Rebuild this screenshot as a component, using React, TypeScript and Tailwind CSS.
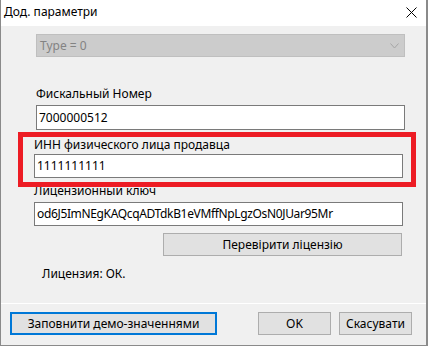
import React from "react";

const font = { fontFamily: '"Noto Sans", "Open Sans", sans-serif' };

export default function App() {
  return (
    <div
      className="relative w-[428px] h-[346px] bg-[#f0f0f0] border-l border-r-2 border-b border-[#8a8a8a] flex flex-col text-[12px] text-black overflow-hidden"
      style={font}
    >
      {/* title bar */}
      <div className="h-[26px] bg-white flex items-center justify-between pl-[3px] pr-[9px] shrink-0">
        <span className="leading-[16px] text-[12px] mt-[-2px]">Дод. параметри</span>
        <svg width="11" height="11" viewBox="0 0 11 11" className="mt-[-2px]">
          <path d="M0.5 0.5 L10.5 10.5 M10.5 0.5 L0.5 10.5" stroke="#000" strokeWidth="1" />
        </svg>
      </div>

      {/* content */}
      <div className="flex flex-col">
        <div className="ml-[35px] mt-[8px] w-[369px] h-[23px] bg-[#cccccc] border border-[#bfbfbf] flex items-center justify-between pl-[3px] pr-[5px]">
          <span className="text-[#838383] leading-[16px]">Type = 0</span>
          <svg width="9" height="6" viewBox="0 0 9 6">
            <path d="M0.5 0.5 L4.5 5 L8.5 0.5" fill="none" stroke="#a6a6a6" strokeWidth="1" />
          </svg>
        </div>

        <div className="ml-[35px] mt-[29px] leading-[16px] h-[16px]">Фискальный Номер</div>
        <div className="ml-[35px] mt-[3px] w-[369px] h-[25px] bg-white border border-[#7a7a7a] flex items-center pl-[2px] leading-[16px]">
          7000000512
        </div>

        <div className="ml-[33px] mt-[7px] leading-[16px] h-[16px]">ИНН физического лица продавца</div>
        <div className="ml-[33px] mt-[1px] w-[369px] h-[24px] bg-white border border-[#7a7a7a] flex items-center pl-[2px] leading-[16px]">
          1111111111
        </div>

        <div className="ml-[33px] mt-[5px] leading-[16px] h-[16px]">Лицензионный ключ</div>
        <div className="ml-[33px] mt-[3px] w-[369px] h-[24px] bg-white border border-[#7a7a7a] flex items-center pl-[2px] leading-[16px] tracking-[-0.35px]">
          od6J5ImNEgKAQcqADTdkB1eVMffNpLgzOsN0JUar95Mr
        </div>

        <div className="ml-[162px] mt-[7px] w-[239px] h-[23px] bg-[#e1e1e1] border border-[#adadad] flex items-center justify-center leading-[16px]">
          Перевірити ліцензію
        </div>

        <div className="ml-[41px] mt-[10px] leading-[16px] h-[16px]">Лицензия: ОК.</div>
      </div>

      <div className="mt-auto border-t border-white h-[42px] flex items-start pt-[8px] pl-[9px] pr-[14px]">
        <div className="w-[207px] h-[23px] bg-[#e1e1e1] border-2 border-[#0078d7] flex items-center justify-center leading-[16px]">
          Заповнити демо-значеннями
        </div>
        <div className="ml-auto w-[73px] h-[23px] bg-[#e1e1e1] border border-[#adadad] flex items-center justify-center leading-[16px]">
          OK
        </div>
        <div className="ml-[8px] w-[73px] h-[23px] bg-[#e1e1e1] border border-[#adadad] flex items-center justify-center leading-[16px]">
          Скасувати
        </div>
      </div>

      {/* red annotation overlay */}
      <div className="absolute left-[17px] top-[132px] w-[398px] h-[55px] border-[5px] border-[#ed1c24] pointer-events-none" />
    </div>
  );
}
